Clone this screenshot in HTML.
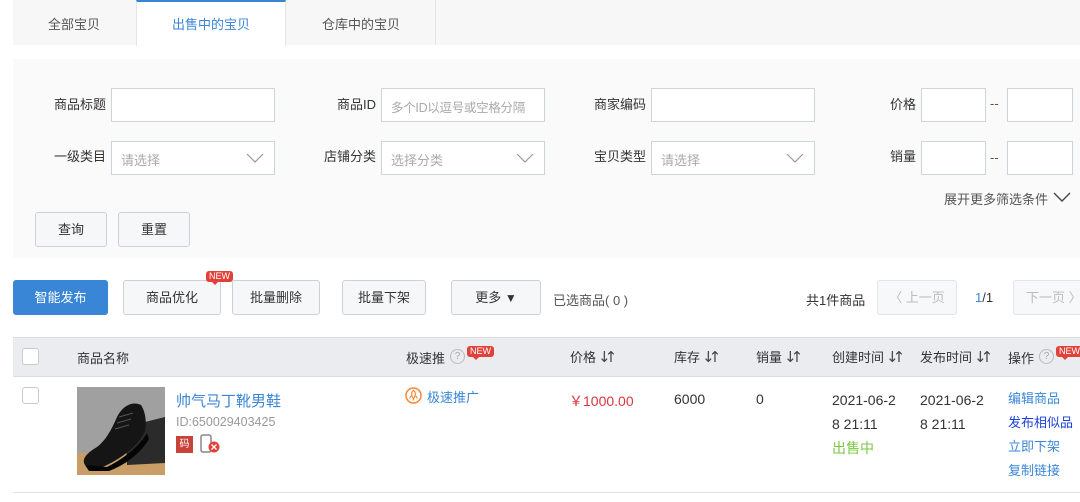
<!DOCTYPE html>
<html><head><meta charset="utf-8"><style>
*{margin:0;padding:0;box-sizing:border-box}
body{width:1080px;height:502px;background:#fff;position:relative;overflow:hidden;font-family:"Liberation Sans","Noto Sans CJK SC",sans-serif;font-size:13px;color:#333}
.a{position:absolute;white-space:nowrap}
.inp{position:absolute;background:#fff;border:1px solid #cfd3dc;height:34px;white-space:nowrap;overflow:hidden}
.sel{color:#aaa;font-size:13px;padding:8px 9px}
.chev{position:absolute;right:10px;top:10px;width:18px;height:12px}
.btn{position:absolute;border:1px solid #cdd0d6;border-radius:3px;background:#f6f7f9;text-align:center;font-size:13px;color:#333}
.lbl{position:absolute;font-size:13px;color:#333;text-align:right}
.new{position:absolute;background:#e2413a;color:#fff;font-size:9px;line-height:11px;padding:0 3px;border-radius:3px;font-family:"Liberation Sans",sans-serif}
.new:after{content:"";position:absolute;left:6px;bottom:-3px;border-left:3px solid transparent;border-right:3px solid transparent;border-top:3px solid #e2413a}
.q{position:absolute;width:15px;height:15px;border:1px solid #bbb;border-radius:50%;color:#aaa;font-size:10px;text-align:center;line-height:13px}
.cb{position:absolute;width:17px;height:17px;border:1px solid #c8cbd0;border-radius:3px;background:#fff}
.sort{font-size:15px;color:#444;letter-spacing:-6px;margin-left:2px;font-family:"DejaVu Sans",sans-serif}
</style></head><body>
<div class="a" style="left:13px;top:0;width:1067px;height:45px;background:#f7f7f7"></div>
<div class="a" style="left:136px;top:0;width:150px;height:46px;background:#fff;border-top:2px solid #3a86d6;border-left:1px solid #e5e5e5;border-right:1px solid #e5e5e5"></div>
<div class="a" style="left:286px;top:0;width:150px;height:45px;border-right:1px solid #e5e5e5"></div>
<div class="a" style="left:48px;top:14px;color:#555">全部宝贝</div>
<div class="a" style="left:172px;top:14px;color:#3a86d6">出售中的宝贝</div>
<div class="a" style="left:322px;top:14px;color:#555">仓库中的宝贝</div>
<div class="a" style="left:13px;top:59px;width:1067px;height:199px;background:#fafafa"></div>
<div class="lbl" style="left:40px;top:94px;width:66px">商品标题</div>
<div class="inp" style="left:111px;top:88px;width:164px"></div>
<div class="lbl" style="left:300px;top:94px;width:76px">商品ID</div>
<div class="inp sel" style="left:381px;top:88px;width:164px;font-size:12.5px;letter-spacing:-0.3px">多个ID以逗号或空格分隔</div>
<div class="lbl" style="left:570px;top:94px;width:76px">商家编码</div>
<div class="inp" style="left:651px;top:88px;width:164px"></div>
<div class="lbl" style="left:870px;top:94px;width:46px">价格</div>
<div class="inp" style="left:921px;top:88px;width:65px"></div>
<div class="a" style="left:990px;top:96px;color:#555">--</div>
<div class="inp" style="left:1007px;top:88px;width:66px"></div>
<div class="lbl" style="left:40px;top:146px;width:66px">一级类目</div>
<div class="inp sel" style="left:111px;top:141px;width:164px">请选择<svg class="chev" viewBox="0 0 18 12"><path d="M1 2l8 8 8-8" fill="none" stroke="#999" stroke-width="1.2"/></svg></div>
<div class="lbl" style="left:300px;top:146px;width:76px">店铺分类</div>
<div class="inp sel" style="left:381px;top:141px;width:164px">选择分类<svg class="chev" viewBox="0 0 18 12"><path d="M1 2l8 8 8-8" fill="none" stroke="#999" stroke-width="1.2"/></svg></div>
<div class="lbl" style="left:570px;top:146px;width:76px">宝贝类型</div>
<div class="inp sel" style="left:651px;top:141px;width:164px">请选择<svg class="chev" viewBox="0 0 18 12"><path d="M1 2l8 8 8-8" fill="none" stroke="#999" stroke-width="1.2"/></svg></div>
<div class="lbl" style="left:870px;top:146px;width:46px">销量</div>
<div class="inp" style="left:921px;top:141px;width:65px"></div>
<div class="a" style="left:990px;top:150px;color:#555">--</div>
<div class="inp" style="left:1007px;top:141px;width:66px"></div>
<div class="a" style="left:944px;top:189px;color:#555">展开更多筛选条件</div>
<svg class="a" style="left:1053px;top:191px" width="18" height="12" viewBox="0 0 18 12"><path d="M1 2l8 8 8-8" fill="none" stroke="#444" stroke-width="1.4"/></svg>
<div class="btn" style="left:35px;top:212px;width:72px;height:35px;line-height:33px">查询</div>
<div class="btn" style="left:118px;top:212px;width:72px;height:35px;line-height:33px">重置</div>
<div class="btn" style="left:13px;top:280px;width:95px;height:35px;line-height:33px;background:#3a86d6;border-color:#3a86d6;color:#fff">智能发布</div>
<div class="btn" style="left:123px;top:280px;width:98px;height:35px;line-height:33px">商品优化</div>
<div class="new" style="left:206px;top:271px">NEW</div>
<div class="btn" style="left:232px;top:280px;width:88px;height:35px;line-height:33px">批量删除</div>
<div class="btn" style="left:342px;top:280px;width:84px;height:35px;line-height:33px">批量下架</div>
<div class="btn" style="left:451px;top:280px;width:90px;height:35px;line-height:33px">更多 <span style="font-size:12px">▼</span></div>
<div class="a" style="left:553px;top:290px;color:#555">已选商品( 0 )</div>
<div class="a" style="left:806px;top:290px;color:#333">共1件商品</div>
<div class="btn" style="left:877px;top:280px;width:80px;height:35px;line-height:33px;color:#bbb;background:#f7f8fa;border-color:#e2e4e8">〈 上一页</div>
<div class="a" style="left:975px;top:290px;color:#333"><span style="color:#3a86d6">1</span>/1</div>
<div class="btn" style="left:1013px;top:280px;width:80px;height:35px;line-height:33px;color:#bbb;background:#f7f8fa;border-color:#e2e4e8;text-align:left;padding-left:12px">下一页 〉</div>
<div class="a" style="left:13px;top:337px;width:1067px;height:40px;background:#ebecf0;border-top:1px solid #dcdde2;border-bottom:1px solid #dcdde2"></div>
<div class="cb" style="left:22px;top:348px"></div>
<div class="a" style="left:77px;top:348px">商品名称</div>
<div class="a" style="left:406px;top:348px">极速推</div>
<div class="q" style="left:450px;top:349px">?</div>
<div class="new" style="left:467px;top:346px">NEW</div>
<div class="a" style="left:570px;top:347px">价格<span class="sort">↓↑</span></div>
<div class="a" style="left:674px;top:347px">库存<span class="sort">↓↑</span></div>
<div class="a" style="left:756px;top:347px">销量<span class="sort">↓↑</span></div>
<div class="a" style="left:832px;top:347px">创建时间<span class="sort">↓↑</span></div>
<div class="a" style="left:920px;top:347px">发布时间<span class="sort">↓↑</span></div>
<div class="a" style="left:1008px;top:348px">操作</div>
<div class="q" style="left:1039px;top:349px">?</div>
<div class="new" style="left:1056px;top:346px">NEW</div>
<div class="cb" style="left:22px;top:387px"></div>
<svg class="a" style="left:77px;top:387px" width="88" height="88" viewBox="0 0 88 88">
<rect width="88" height="88" fill="#a0a0a0"/>
<rect y="66" width="88" height="22" fill="#c89d66"/>
<path d="M48 40 L88 30 L88 76 L50 78Z" fill="#2b2b2b"/>
<path d="M8 78 C4 72 10 66 20 60 C28 54 34 44 40 30 C46 18 56 14 64 18 C68 24 70 34 68 44 C62 58 46 70 30 78 C22 82 12 82 8 78Z" fill="#151515"/>
<path d="M8 78 L30 80 C46 72 62 60 70 46 L72 52 C64 66 48 78 32 84 L12 84Z" fill="#050505"/>
<path d="M42 30 L56 26 M40 36 L54 32 M38 42 L52 38" stroke="#555" stroke-width="1"/>
</svg>
<div class="a" style="left:176px;top:390px;font-size:15px;color:#3a86d6">帅气马丁靴男鞋</div>
<div class="a" style="left:176px;top:415px;color:#999;font-size:12.5px">ID:650029403425</div>
<div class="a" style="left:176px;top:436px;width:17px;height:17px;background:#c8443a;color:#fff;font-size:10px;line-height:17px;text-align:center">码</div>
<svg class="a" style="left:200px;top:434px" width="22" height="20" viewBox="0 0 22 20"><rect x="1" y="1" width="10" height="17" rx="2" fill="none" stroke="#888" stroke-width="1.5"/><circle cx="14" cy="13" r="5.5" fill="#e2413a"/><path d="M11.5 10.5l5 5M16.5 10.5l-5 5" stroke="#fff" stroke-width="1.3"/></svg>
<svg class="a" style="left:405px;top:387px" width="17" height="17" viewBox="0 0 17 17"><circle cx="8.5" cy="8.5" r="7.5" fill="none" stroke="#f08a3a" stroke-width="1.5"/><path d="M8.5 3.5 C11 5 11 9 8.5 11.5 C6 9 6 5 8.5 3.5Z M6 9 L4.5 11.5 M11 9 L12.5 11.5 M8.5 11.5 V13.5" fill="none" stroke="#f08a3a" stroke-width="1.2"/></svg>
<div class="a" style="left:427px;top:387px;color:#3a86d6">极速推广</div>
<div class="a" style="left:569px;top:391px;font-size:14px;color:#d9363e">￥1000.00</div>
<div class="a" style="left:674px;top:391px;font-size:14px">6000</div>
<div class="a" style="left:756px;top:391px;font-size:14px">0</div>
<div class="a" style="left:832px;top:388px;font-size:14px;line-height:24px">2021-06-2<br>8 21:11<br><span style="color:#7ac943">出售中</span></div>
<div class="a" style="left:920px;top:388px;font-size:14px;line-height:24px">2021-06-2<br>8 21:11</div>
<div class="a" style="left:1008px;top:387px;font-size:13px;line-height:24px;color:#3a86d6">编辑商品<br><span style="color:#1a3fd6">发布相似品</span><br>立即下架<br>复制链接</div>
<div class="a" style="left:13px;top:492px;width:1067px;height:1px;background:#e2e3e6"></div>
</body></html>
